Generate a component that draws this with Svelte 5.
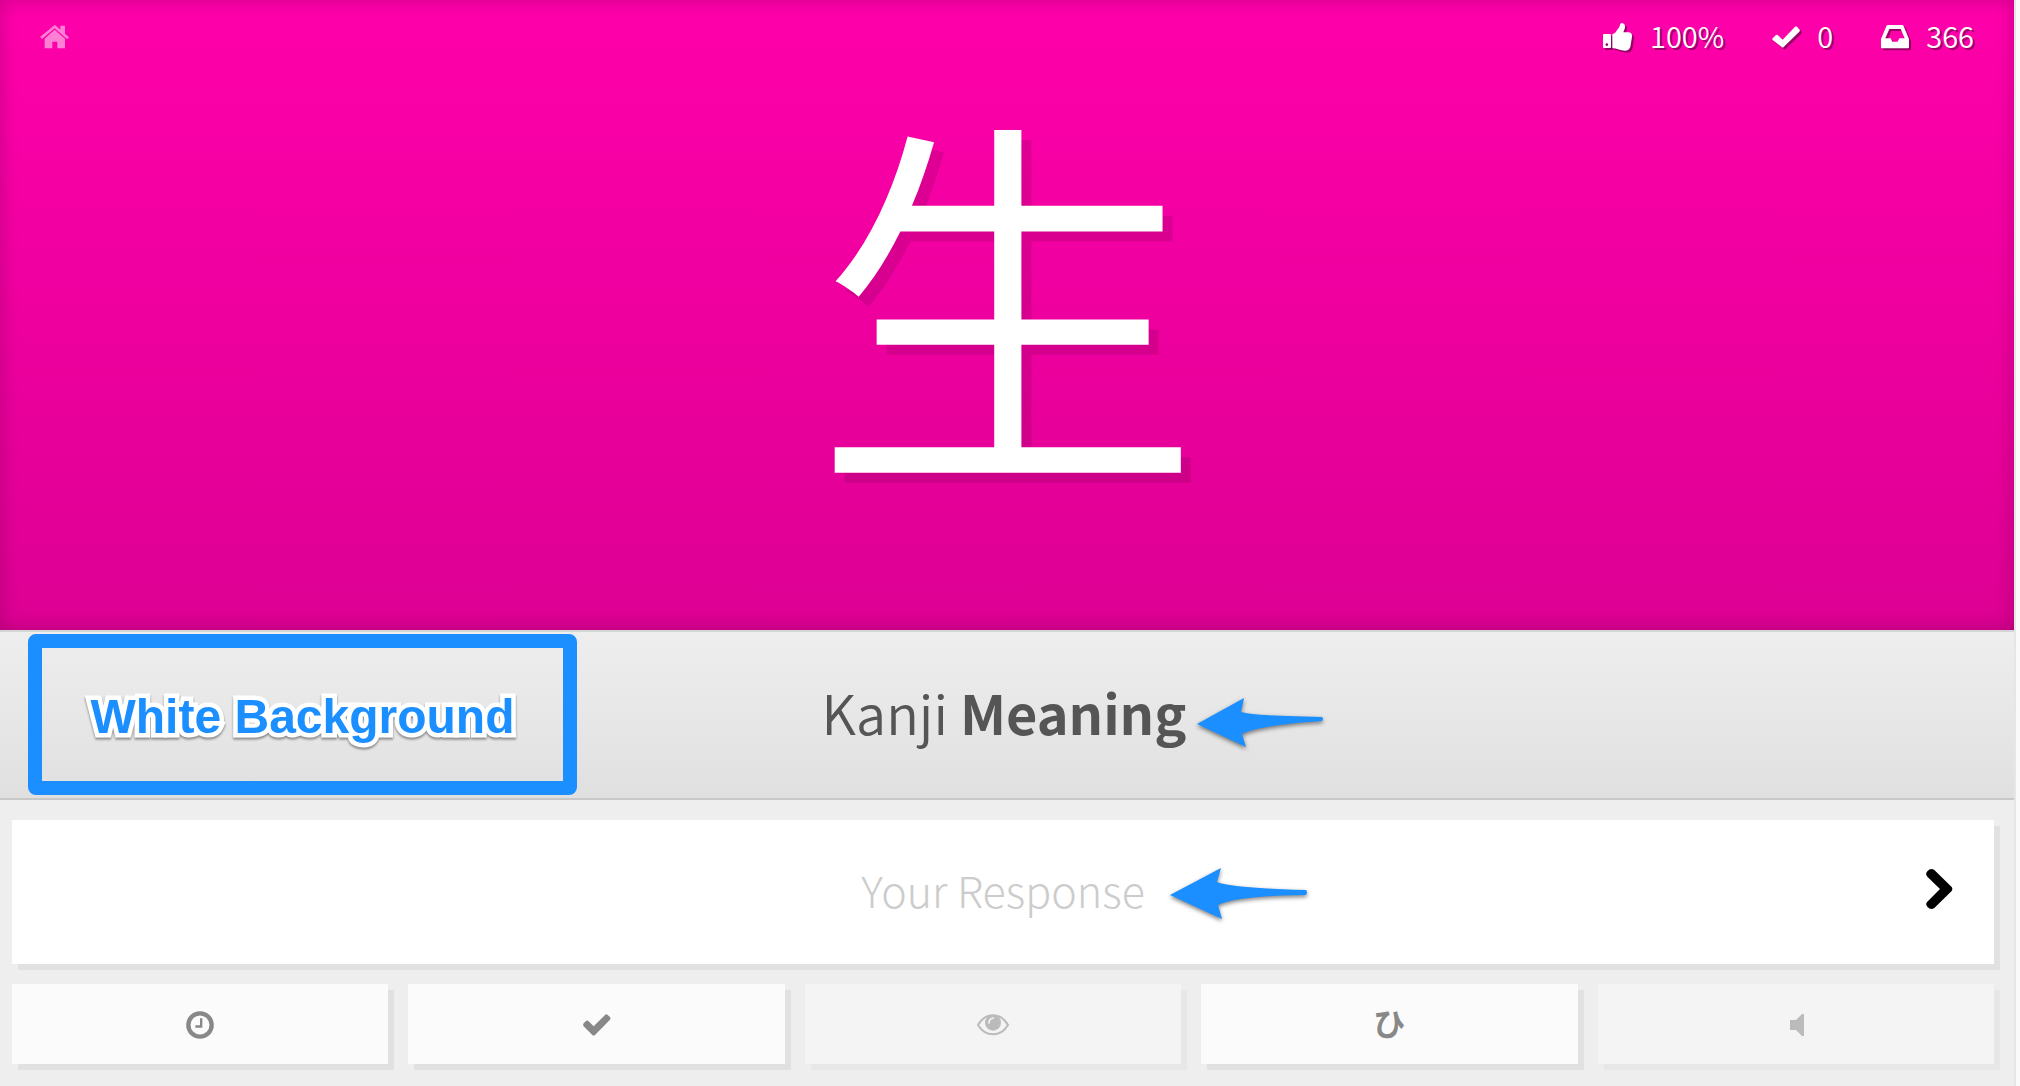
<script lang="ts">
  interface Tool {
    name: string;
    disabled?: boolean;
  }

  const tools: Tool[] = [
    { name: "Last items" },
    { name: "Wrap up" },
    { name: "Item info", disabled: true },
    { name: "Kana chart" },
    { name: "Audio", disabled: true },
  ];

  let response = $state("");
</script>

<div class="page">
  <section class="question">
    <header>
      <a class="home" href="/" aria-label="Home">
        <svg width="29" height="24" viewBox="0 0 87 72">
          <path d="M44 14 L75 41 V70 H52 V50 H37 V70 H14 V41 Z" />
          <path d="M43 1 Q44 0 46 1 L61 14 V2 H75 V26 L86 36 Q87 37 86 38 L83 41 L80 41 L44 10 L7 41 L4 40 L1 37 Q0 36 1 35 Z" />
        </svg>
      </a>
      <ul class="stats">
        <li>
          <svg width="30" height="28" viewBox="0 0 90 84">
            <path fill-rule="evenodd" d="M3 33 H21 Q24 33 24 36 V72 Q24 75 21 75 H3 Q0 75 0 72 V36 Q0 33 3 33 Z M11 61 a4 4 0 1 0 1 0 Z" />
            <path d="M28 34 Q37 31 43 20 Q50 14 52 3 Q54 -1 60 1 Q69 5 65 17 L61 28 H78 Q88 30 87 41 L82 72 Q78 83 66 83 Q52 82 40 77 Q34 75 28 75 Z" />
          </svg>
          <span>100%</span>
        </li>
        <li>
          <svg width="28" height="22" viewBox="0 0 84 66">
            <path d="M2 37 L12 27 Q15 25 18 28 L32 41 L69 2 Q72 -1 75 2 L83 11 Q85 14 82 17 L35 63 Q32 66 29 63 L2 42 Q0 40 2 37 Z" />
          </svg>
          <span>0</span>
        </li>
        <li>
          <svg width="28" height="24" viewBox="0 0 84 72">
            <path fill-rule="evenodd" d="M16 4 Q17 0 21 0 H63 Q67 0 68 4 L84 42 V67 Q84 70 80 70 H4 Q0 70 0 67 V42 Z M25 12 L13 40 H29 L34 50 H50 L55 40 H71 L59 12 Z" />
          </svg>
          <span>366</span>
        </li>
      </ul>
    </header>
    <div class="character" lang="ja">生</div>
  </section>

  <section class="type">
    <h1>Kanji <strong>Meaning</strong></h1>
    <div class="callout"><span>White Background</span></div>
    <svg class="arrow type-arrow" width="128" height="54" viewBox="0 0 128 54">
      <path d="M1 27 L48 1 L45 15 Q60 19 126 20 Q128 22 126 24 Q64 28 46 37 L50 50 Z" />
    </svg>
  </section>

  <form onsubmit={(e) => e.preventDefault()}>
    <div class="answer">
      <input type="text" aria-label="Your Response" placeholder="Your Response" bind:value={response} />
      <button class="submit" aria-label="Submit">
        <svg width="28" height="42" viewBox="0 0 84 126">
          <path d="M7 10 Q17 -2 28 6 L80 57 Q84 63 80 69 L28 120 Q17 128 7 116 Q0 108 7 101 L45 63 L7 26 Q0 18 7 10 Z" />
        </svg>
      </button>
      <svg class="arrow answer-arrow" width="138" height="54" viewBox="0 0 138 54">
        <path d="M0 28 L51 1 L47 15 Q62 21 136 23 Q138 25 136 28 Q66 29 48 38 L52 52 Z" />
      </svg>
    </div>

    <ul class="tools">
      {#each tools as tool, i (tool.name)}
        <li>
          <button type="button" aria-label={tool.name} disabled={tool.disabled}>
            {#if i === 0}
              <svg width="28" height="28" viewBox="0 0 84 84">
                <circle cx="42" cy="42" r="35" fill="none" stroke="currentColor" stroke-width="13" />
                <path d="M42 22 H49 V50 H28 V43 H42 Z" />
              </svg>
            {:else if i === 1}
              <svg width="28" height="22" viewBox="0 0 84 66">
                <path d="M2 28 L9 21 Q13 18 17 22 L32 37 L66 3 Q70 -1 74 3 L81 9 Q84 13 81 17 L36 63 Q32 66 28 63 L2 37 Q-1 33 2 28 Z" />
              </svg>
            {:else if i === 2}
              <svg width="32" height="22" viewBox="0 0 96 66">
                <path d="M3 33 Q20 4 48 4 Q76 4 93 33 Q76 61 48 61 Q20 61 3 33 Z" fill="none" stroke="currentColor" stroke-width="6" />
                <circle cx="48" cy="26" r="24" />
                <path class="glint" d="M36 27 Q36 14 49 12" />
              </svg>
            {:else if i === 3}
              <span lang="ja">ひ</span>
            {:else}
              <svg width="16" height="24" viewBox="0 0 16 24">
                <path d="M2 7 H8 L14 1 H16 V23 H14 L8 17 H2 Z" />
              </svg>
            {/if}
          </button>
        </li>
      {/each}
    </ul>
  </form>
</div>

<style>
  :global(body) {
    margin: 0;
    background: #fafafa;
  }

  .page {
    margin-right: 4px;
    min-height: 100vh;
    border-right: 2px solid #e6e6e6;
    background: #eee;
    font-family: "Noto Sans CJK JP", "Open Sans", sans-serif;
    color: #555;
  }

  .page,
  .page * {
    box-sizing: border-box;
  }

  ul {
    list-style: none;
    margin: 0;
    padding: 0;
  }

  svg {
    display: block;
    fill: currentColor;
  }

  /* Question */
  .question {
    height: 630px;
    background: linear-gradient(#f0a, #dd0093);
    box-shadow: inset 0 0 20px rgba(0, 0, 0, 0.2);
    color: #fff;
  }

  header {
    display: flex;
    justify-content: space-between;
    align-items: center;
    height: 74px;
    padding: 0 40px;
  }

  .home {
    color: #fff;
    opacity: 0.5;
  }

  .stats {
    display: flex;
    gap: 48px;
    font-size: 29px;
    font-weight: 350;
    line-height: 44px;
    text-shadow: 2px 2px 0 rgba(0, 0, 0, 0.4);
  }

  .stats li {
    display: flex;
    align-items: center;
    gap: 17px;
  }

  .stats span {
    padding-bottom: 4px;
  }

  .stats svg {
    overflow: visible;
    filter: drop-shadow(2px 2px 0 rgba(0, 0, 0, 0.4));
  }

  .character {
    font-size: 388px;
    line-height: 424px;
    font-weight: 350;
    text-align: center;
    text-shadow: 10px 10px 0 rgba(0, 0, 0, 0.1);
  }

  /* Question type */
  .type {
    position: relative;
    height: 170px;
    border-top: 2px solid #d5d5d5;
    border-bottom: 2px solid #c8c8c8;
    background: linear-gradient(#eee, #e0e0e0);
  }

  h1 {
    margin: 0;
    padding-right: 6px;
    font-size: 54px;
    font-weight: 350;
    line-height: 160px;
    text-align: center;
  }

  h1 strong {
    font-weight: 700;
  }

  /* Callouts drawn over the page */
  .callout {
    position: absolute;
    top: 2px;
    left: 28px;
    width: 549px;
    height: 161px;
    border: 14px solid #1b8fff;
    border-radius: 8px;
    color: #1b8fff;
    font: bold 48px/138px "Liberation Sans", Arial, sans-serif;
    text-align: center;
  }

  .callout span {
    -webkit-text-stroke: 9px #fff;
    paint-order: stroke fill;
    stroke-linejoin: round;
    filter: drop-shadow(0 2px 1px rgba(0, 0, 0, 0.4));
  }

  .arrow {
    position: absolute;
    color: #1b8fff;
    overflow: visible;
    filter: drop-shadow(0 2px 2px rgba(0, 0, 0, 0.5));
    pointer-events: none;
  }

  .type-arrow {
    top: 65px;
    left: calc(50% + 189px);
  }

  .answer-arrow {
    top: 47px;
    left: calc(50% + 167px);
  }

  /* Answer */
  form {
    padding: 20px 20px 22px 12px;
  }

  .answer {
    position: relative;
    display: flex;
    height: 144px;
    padding-bottom: 6px;
    background: #fff;
    box-shadow: 6px 6px 0 #e1e1e1;
  }

  input {
    flex: 1;
    min-width: 0;
    border: 0;
    padding: 0 0 0 110px;
    background: transparent;
    color: #555;
    font: 200 43px "Noto Sans CJK JP", sans-serif;
    text-align: center;
    outline: none;
  }

  input::placeholder {
    color: #ccc;
    opacity: 1;
  }

  .submit {
    display: grid;
    place-items: center;
    width: 110px;
    border: 0;
    padding: 0;
    background: transparent;
    color: #000;
    cursor: pointer;
  }

  /* Tools */
  .tools {
    display: flex;
    margin-top: 20px;
  }

  .tools li {
    flex: 0 0 20%;
    padding-right: 20px;
  }

  .tools li:last-child {
    padding-right: 0;
  }

  .tools button {
    display: grid;
    place-items: center;
    width: 100%;
    height: 80px;
    border: 0;
    padding: 2px 0 0;
    background: #fbfbfb;
    box-shadow: 6px 6px 0 #e1e1e1;
    color: #888;
    font: bold 32px/40px "Noto Sans CJK JP", sans-serif;
    cursor: pointer;
  }

  .tools button:disabled {
    background: #f4f4f4;
    box-shadow: 6px 6px 0 #e7e7e7;
    color: #bbb;
    cursor: default;
  }

  .tools span {
    padding-bottom: 6px;
  }

  .glint {
    fill: none;
    stroke: #f4f4f4;
    stroke-width: 5px;
    stroke-linecap: round;
  }
</style>
